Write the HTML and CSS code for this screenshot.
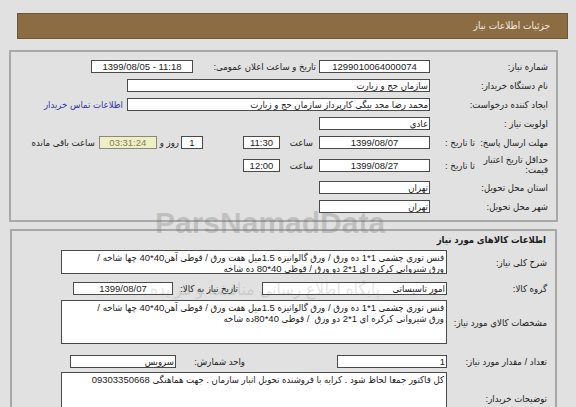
FILE: index.html
```html
<!DOCTYPE html>
<html lang="fa" dir="rtl">
<head>
<meta charset="utf-8">
<title>جزئیات اطلاعات نیاز</title>
<link rel="stylesheet" href="styles.css">
</head>
<body>
<div class="header">جزئیات اطلاعات نیاز</div>

<div class="panel p1">
  <div class="row">
    <div class="lbl">شماره نیاز:</div>
    <div class="box w111 ctr">1299010064000074</div>
    <div class="mid w126">تاریخ و ساعت اعلان عمومی:</div>
    <div class="box w102 ctr">1399/08/05 - 11:18</div>
  </div>
  <div class="row">
    <div class="lbl">نام دستگاه خریدار:</div>
    <div class="box w303">سازمان حج و زیارت</div>
  </div>
  <div class="row">
    <div class="lbl">ایجاد کننده درخواست:</div>
    <div class="box w303">محمد رضا مجد بیگی کارپرداز سازمان حج و زیارت</div>
    <a class="link" href="#">اطلاعات تماس خریدار</a>
  </div>
  <div class="row">
    <div class="lbl">اولویت نیاز :</div>
    <div class="box w111">عادی</div>
  </div>
  <div class="row">
    <div class="lbl split"><span class="main">مهلت ارسال پاسخ:</span><span class="sub">تا تاریخ :</span></div>
    <div class="box w111 ctr">1399/08/07</div>
    <div class="saat">ساعت</div>
    <div class="box w37 ctr">11:30</div>
    <div class="sp40"></div>
    <div class="box w22 ctr">1</div>
    <div class="ruz">روز و</div>
    <div class="box w58 ctr remain">03:31:24</div>
    <div class="tail">ساعت باقی مانده</div>
  </div>
  <div class="row tall">
    <div class="lbl split"><span class="main two">حداقل تاریخ اعتبار<br>قیمت:</span><span class="sub">تا تاریخ :</span></div>
    <div class="box w111 ctr">1399/08/27</div>
    <div class="saat">ساعت</div>
    <div class="box w37 ctr">12:00</div>
  </div>
  <div class="row">
    <div class="lbl">استان محل تحویل:</div>
    <div class="box w111">تهران</div>
  </div>
  <div class="row">
    <div class="lbl">شهر محل تحویل:</div>
    <div class="box w111">تهران</div>
  </div>
</div>

<div class="panel p2">
  <div class="title">اطلاعات کالاهای مورد نیاز</div>
  <div class="row2 r-sharh">
    <div class="lbl2">شرح کلی نیاز:</div>
    <div class="area a-sharh">فنس توری چشمی 1*1 ده ورق / ورق گالوانیزه 1.5میل هفت ورق / قوطی آهن40*40 چها شاخه /<br>ورق شیروانی کرکره ای 1*2 دو ورق / قوطی 40*80 ده شاخه</div>
  </div>
  <div class="row2 r-group">
    <div class="lbl2">گروه کالا:</div>
    <div class="box w185">امور تاسیساتی</div>
    <div class="mid2 w89">تاریخ نیاز به کالا:</div>
    <div class="box w100 ctr">1399/08/07</div>
  </div>
  <div class="row2 r-spec">
    <div class="lbl2">مشخصات کالای مورد نیاز:</div>
    <div class="area a-spec">فنس توری چشمی 1*1 ده ورق / ورق گالوانیزه 1.5میل هفت ورق / قوطی آهن40*40 چها شاخه /<br>ورق شیروانی کرکره ای 1*2 دو ورق&nbsp; / قوطی 40*80ده شاخه</div>
  </div>
  <div class="row2 r-count">
    <div class="lbl2">تعداد / مقدار مورد نیاز:</div>
    <div class="box w110">1</div>
    <div class="mid3">واحد شمارش:</div>
    <div class="box w106">سرویس</div>
  </div>
  <div class="row2 r-desc">
    <div class="lbl2">توضیحات خریدار:</div>
    <div class="area a-desc">کل فاکتور جمعا لحاظ شود . کرایه با فروشنده تحویل انبار سازمان . جهت هماهنگی 09303350668</div>
  </div>
</div>

<div class="wm">ParsNamadData</div>
<div class="wm2">پایگاه اطلاع رسانی مناقصه و مزایده</div>
</body>
</html>
```

FILE: styles.css
```css
* { box-sizing: border-box; }
html, body { margin: 0; padding: 0; }
body {
  background: #e1e1e1;
  font-family: "Liberation Sans", "DejaVu Sans Condensed", "DejaVu Sans", sans-serif;
  font-size: 9.5px;
  color: #222;
  direction: rtl;
  position: relative;
  height: 407px;
  overflow: hidden;
  white-space: nowrap;
}
.header {
  margin: 13px 8px 0 17px;
  height: 26px;
  background: #8c6c42;
  border: 1px solid #6e5637;
  color: #f3ece0;
  padding-right: 17px;
  line-height: 24px;
  font-size: 10px;
}
.panel { border: 2px solid #a8a8a8; }
.p1 { margin: 11px 18px 0 9px; padding: 5px 8px 4px 0; }
.row { display: flex; align-items: center; height: 19px; }
.row.tall { height: 26px; }
.lbl { width: 118px; flex: none; }
.split { display: flex; align-items: center; }
.split .main { width: 73px; flex: none; }
.split .main.two { line-height: 10px; white-space: normal; }
.split .sub { flex: none; }
.box {
  flex: none;
  height: 13px;
  background: #fff;
  border: 1px solid #4a4a4a;
  line-height: 11px;
  overflow: hidden;
  padding: 0 1px;
  text-align: right;
}
.ctr { direction: ltr; text-align: center; }
.w111 { width: 111px; }
.w102 { width: 102px; }
.w303 { width: 303px; }
.w37 { width: 37px; }
.w22 { width: 22px; }
.w58 { width: 58px; }
.w185 { width: 185px; }
.w100 { width: 100px; }
.w110 { width: 110px; }
.w106 { width: 106px; }
.mid { flex: none; padding-right: 3px; }
.w126 { width: 126px; }
.link { color: #3535a5; text-decoration: none; margin-right: 4px; }
.saat { width: 39px; flex: none; padding-right: 6px; }
.sp40 { width: 40px; flex: none; }
.ruz { flex: none; padding: 0 2px 0 3px; }
.remain { background: #efefc6; color: #80805a; border-color: #8a8a7a; }
.tail { margin-right: 4px; }

.p2 { margin: 7px 19px 0 10px; padding: 0 8px 0 0; height: 200px; }
.title { font-weight: bold; line-height: 18px; padding-right: 1px; }
.row2 { display: flex; align-items: center; }
.lbl2 { width: 100px; flex: none; }
.area {
  flex: none;
  width: 386px;
  background: #fff;
  border: 1px solid #4a4a4a;
  padding: 2px 2px 0 2px;
  line-height: 10.5px;
  overflow: hidden;
  text-align: right;
}
.a-sharh { height: 24px; }
.a-spec { height: 44px; }
.a-desc { height: 52px; }
.r-sharh { margin-top: 1px; }
.r-group { margin-top: 8px; }
.r-spec { margin-top: 5px; }
.r-count { margin-top: 11px; }
.r-desc { margin-top: 4px; }
.mid2 { flex: none; padding-right: 24px; }
.w89 { width: 89px; }
.mid3 { flex: none; width: 161px; padding-right: 92px; }

.wm {
  position: absolute;
  left: 155px;
  top: 206px;
  font: bold 30px "Liberation Sans", sans-serif;
  color: rgba(110, 110, 110, 0.28);
  direction: ltr;
  pointer-events: none;
}
.wm2 {
  position: absolute;
  left: 150px;
  top: 279px;
  font-size: 17px;
  font-family: "DejaVu Sans Condensed", "DejaVu Sans", sans-serif;
  color: rgba(110, 110, 110, 0.2);
  pointer-events: none;
}
```
